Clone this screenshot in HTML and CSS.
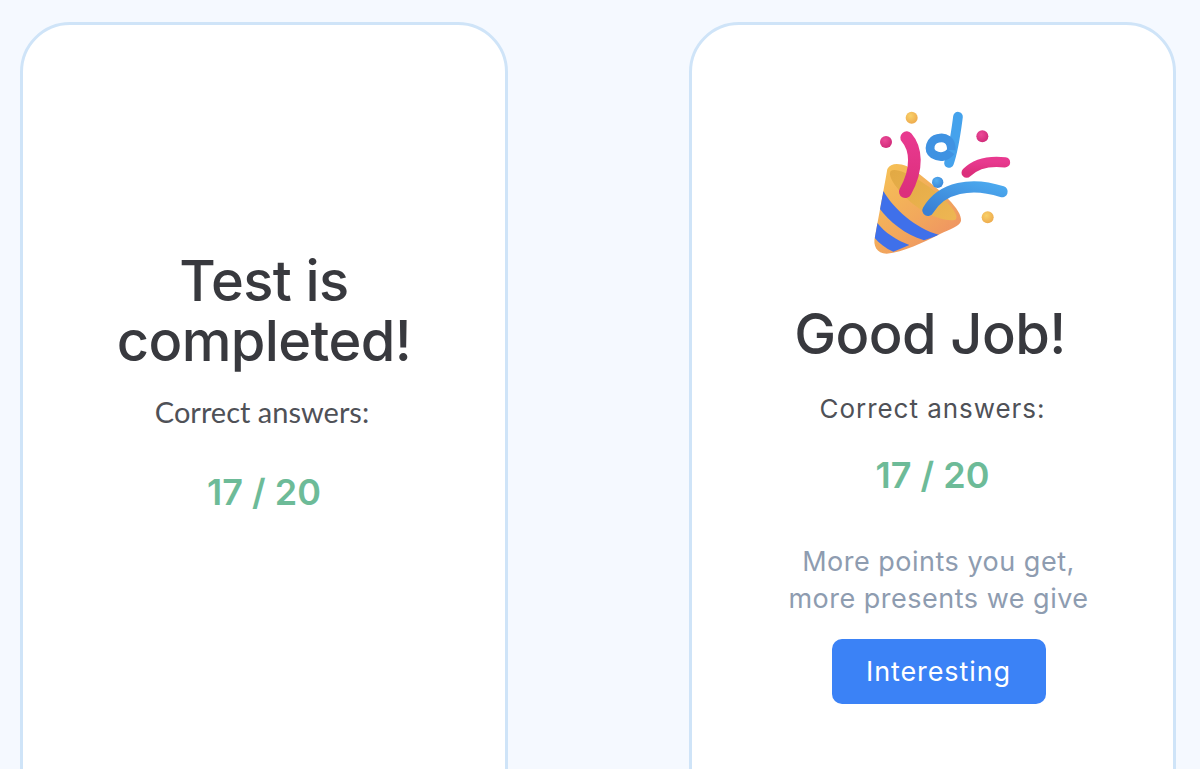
FILE: index.html
```html
<!DOCTYPE html>
<html lang="en">
<head>
<meta charset="utf-8">
<title>Results</title>
<link rel="stylesheet" href="styles.css">
</head>
<body>
<main class="page">
  <section class="card card-left">
    <h1 class="title">Test is<br>completed!</h1>
    <p class="label label-left">Correct answers:</p>
    <p class="score score-left">17 / 20</p>
  </section>
  <section class="card card-right">
    <svg class="popper" viewBox="0 0 540 510" width="180" height="170" aria-hidden="true">
      <defs>
        <linearGradient id="cone" x1="0" y1="0" x2="0.8" y2="1"><stop offset="0" stop-color="#f6c455"/><stop offset="0.6" stop-color="#f2a85c"/><stop offset="1" stop-color="#ee8f63"/></linearGradient>
        <linearGradient id="mouth" x1="0" y1="0" x2="1" y2="1"><stop offset="0" stop-color="#e2a944"/><stop offset="1" stop-color="#eeb653"/></linearGradient>
        <linearGradient id="blue" x1="0" y1="1" x2="1" y2="0"><stop offset="0" stop-color="#3a80d4"/><stop offset="1" stop-color="#4ba8ee"/></linearGradient>
        <linearGradient id="pink" x1="0" y1="0" x2="0" y2="1"><stop offset="0" stop-color="#e8398f"/><stop offset="1" stop-color="#dc2f7c"/></linearGradient>
        <radialGradient id="gold" cx="0.4" cy="0.35" r="0.7"><stop offset="0" stop-color="#f9d169"/><stop offset="1" stop-color="#eda94c"/></radialGradient>
        <radialGradient id="rose" cx="0.4" cy="0.35" r="0.7"><stop offset="0" stop-color="#ec4a98"/><stop offset="1" stop-color="#cf2a78"/></radialGradient>
        <radialGradient id="sky" cx="0.4" cy="0.35" r="0.7"><stop offset="0" stop-color="#55aef0"/><stop offset="1" stop-color="#3a86d8"/></radialGradient>
        <clipPath id="coneClip"><path d="M112 222 C125 198 165 203 205 235 C270 285 338 345 333 378 C328 395 300 402 270 417 C220 442 160 472 110 476 C80 476 68 450 75 425 C85 370 100 290 112 222Z"/></clipPath>
      </defs>
      <circle cx="185" cy="68" r="18" fill="url(#gold)"/>
      <circle cx="108" cy="141" r="18" fill="url(#rose)"/>
      <circle cx="397" cy="124" r="18" fill="url(#rose)"/>
      <circle cx="413" cy="367" r="18" fill="url(#gold)"/>
      <path d="M112 222 C125 198 165 203 205 235 C270 285 338 345 333 378 C328 395 300 402 270 417 C220 442 160 472 110 476 C80 476 68 450 75 425 C85 370 100 290 112 222Z" fill="url(#cone)"/>
      <g clip-path="url(#coneClip)">
        <path d="M100 288 C130 340 195 400 268 420 L222 436 C165 418 118 380 87 338Z" fill="#3f70ea"/>
        <path d="M80 382 C105 414 140 436 178 450 L130 470 C105 460 85 442 68 422Z" fill="#3f70ea"/>
      </g>
      <path d="M122 228 C145 212 235 268 285 315 C318 348 325 368 316 374 C285 384 210 352 170 310 C140 280 112 245 122 228Z" fill="url(#mouth)"/>
      <path d="M170 128 C198 160 205 220 166 290" fill="none" stroke="url(#pink)" stroke-width="38" stroke-linecap="round"/>
      <path d="M234 346 C275 276 365 260 456 290" fill="none" stroke="url(#blue)" stroke-width="34" stroke-linecap="round"/>
      <path d="M350 233 C380 203 420 197 465 202" fill="none" stroke="url(#pink)" stroke-width="31" stroke-linecap="round"/>
      <path d="M324 65 C318 110 312 160 297 204" fill="none" stroke="#45a2ec" stroke-width="29" stroke-linecap="round"/>
      <path d="M304 165 C305 135 285 125 265 130 C240 135 232 165 250 178 C270 190 292 185 302 170" fill="none" stroke="#3f92e2" stroke-width="26"/>
      <circle cx="263" cy="262" r="17" fill="url(#sky)"/>
    </svg>
    <h1 class="title title-right">Good Job!</h1>
    <p class="label label-right">Correct answers:</p>
    <p class="score score-right">17 / 20</p>
    <p class="note">More points you get,<br>more presents we give</p>
    <button class="cta" type="button">Interesting</button>
  </section>
</main>
</body>
</html>
```
FILE: styles.css
```css
* { box-sizing: border-box; }
html, body { margin: 0; height: 769px; overflow: hidden; }
body { background: #f5f9ff; font-family: Inter, "Noto Sans", sans-serif; color: #38393e; }
.page { display: flex; justify-content: space-between; padding: 22px 24px 0 20px; height: 769px; overflow: hidden; }
.card { width: 488px; height: 820px; flex: none; background: #fff; border: 3px solid #cfe4f8; border-radius: 50px; display: flex; flex-direction: column; align-items: center; }
.card-left { padding-top: 226px; }
.card-right { padding-top: 70px; width: 487px; }
.title { margin: 0; font-size: 56px; line-height: 60px; font-weight: 500; letter-spacing: -0.6px; text-align: center; color: #38393e; }
.title-right { margin-right: 5px; }
.popper { margin: 0 0 39px 15px; flex: none; }
.label { margin: 26px 0 0; font-size: 26px; line-height: 36px; color: #4f5157; }
.label-left { margin: 23px 4px 0 0; font-family: Lato, sans-serif; font-size: 29px; }
.label-right { margin-top: 27px; letter-spacing: 0.95px; }
.score { margin: 27px 0 0; font-size: 36px; line-height: 44px; font-weight: 600; color: #6dbb98; }
.score-left { margin-top: 40px; }
.score-right { margin-top: 26px; }
.note { margin: 46px 0 0 12px; font-size: 27px; line-height: 37px; letter-spacing: 0.5px; color: #8e9cb0; text-align: center; }
.cta { margin: 22px 0 0 12px; width: 214px; height: 65px; border: 0; border-radius: 10px; background: #3b82f6; color: #fff; font: 400 27px Inter, sans-serif; letter-spacing: 0.9px; }
```
